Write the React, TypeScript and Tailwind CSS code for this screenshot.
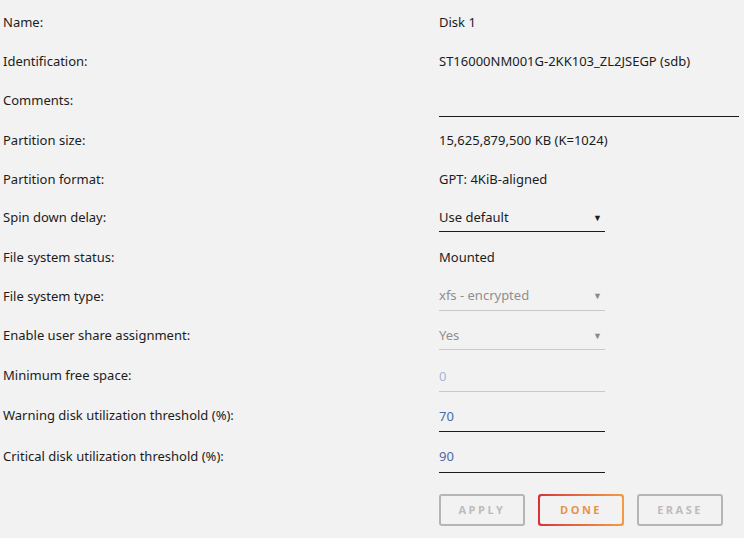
import React from 'react';

type Row = { label: string; h: string; kind: 'text' | 'comment' | 'select' | 'input'; value?: string; disabled?: boolean };

const ROWS: Row[] = [
  { label: 'Name:', h: 'h-[39px]', kind: 'text', value: 'Disk 1' },
  { label: 'Identification:', h: 'h-[39px]', kind: 'text', value: 'ST16000NM001G-2KK103_ZL2JSEGP (sdb)' },
  { label: 'Comments:', h: 'h-[40px]', kind: 'comment', value: '' },
  { label: 'Partition size:', h: 'h-[40px]', kind: 'text', value: '15,625,879,500 KB (K=1024)' },
  { label: 'Partition format:', h: 'h-[37px]', kind: 'text', value: 'GPT: 4KiB-aligned' },
  { label: 'Spin down delay:', h: 'h-[40px]', kind: 'select', value: 'Use default' },
  { label: 'File system status:', h: 'h-[39px]', kind: 'text', value: 'Mounted' },
  { label: 'File system type:', h: 'h-[39px]', kind: 'select', value: 'xfs - encrypted', disabled: true },
  { label: 'Enable user share assignment:', h: 'h-[40px]', kind: 'select', value: 'Yes', disabled: true },
  { label: 'Minimum free space:', h: 'h-[40px]', kind: 'input', value: '0', disabled: true },
  { label: 'Warning disk utilization threshold (%):', h: 'h-[40px]', kind: 'input', value: '70' },
  { label: 'Critical disk utilization threshold (%):', h: 'h-[41px]', kind: 'input', value: '90' },
];

const Control: React.FC<{ row: Row }> = ({ row }) => {
  if (row.kind === 'text') return <span className="text-[#1c1c1c]">{row.value}</span>;
  if (row.kind === 'comment')
    return <div className="mt-[2px] h-[30px] w-[300px] border-b border-[#1c1c1c]" />;
  if (row.kind === 'select')
    return (
      <div
        className={`flex h-[28px] w-[166px] items-center justify-between border-b pr-[3px] ${
          row.disabled ? 'border-[#c9c9c9] text-[#8f8f8f]' : 'border-[#1c1c1c] text-[#1c1c1c]'
        }`}
      >
        <span>{row.value}</span>
        <span className={`text-[9px] ${row.disabled ? 'text-[#8a8a8a]' : 'text-[#1c1c1c]'}`}>▼</span>
      </div>
    );
  return (
    <div
      className={`mt-[2px] flex h-[30px] w-[166px] items-center border-b ${
        row.disabled ? 'border-[#c9c9c9] text-[#a6b7d8]' : 'border-[#1c1c1c] text-[#4a6aa8]'
      }`}
    >
      {row.value}
    </div>
  );
};

export default function App() {
  return (
    <div className="min-h-[538px] w-full bg-[#f2f2f2] pt-[3px] font-['Noto_Sans',sans-serif] text-[13px] text-[#1c1c1c]">
      {ROWS.map((row) => (
        <div key={row.label} className={`grid grid-cols-[439px_1fr] items-center ${row.h}`}>
          <div className="pl-[3px]">{row.label}</div>
          <div>
            <Control row={row} />
          </div>
        </div>
      ))}
      <div className="mt-[17px] flex gap-[13px] pl-[439px] font-['Open_Sans',sans-serif] text-[11px] font-bold tracking-[2.5px]">
        <button className="h-[32px] w-[86px] rounded-[3px] border-2 border-[#b5b5b5] text-[#bcbcbc]">APPLY</button>
        <div className="h-[32px] w-[86px] rounded-[3px] bg-gradient-to-r from-[#d6303a] to-[#f39b42] p-[2px]">
          <button className="h-full w-full rounded-[2px] bg-[#f2f2f2] text-[#e8924a]">DONE</button>
        </div>
        <button className="h-[32px] w-[86px] rounded-[3px] border-2 border-[#b5b5b5] text-[#bcbcbc]">ERASE</button>
      </div>
    </div>
  );
}
